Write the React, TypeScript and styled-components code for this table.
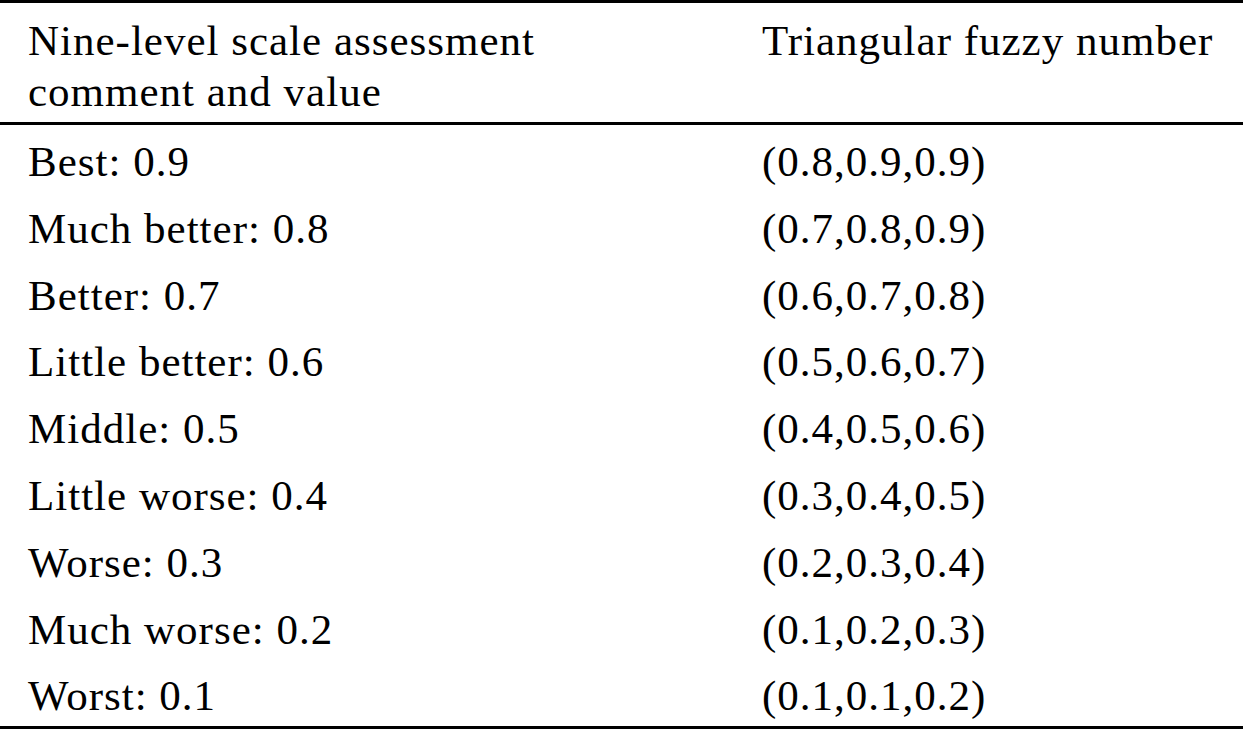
import styled, { createGlobalStyle } from "styled-components";

const GlobalStyle = createGlobalStyle`
  html, body {
    margin: 0;
    padding: 0;
    background: #ffffff;
  }
  body {
    font-family: "Liberation Serif", "Times New Roman", serif;
    color: #000000;
  }
`;

const rows: [string, string][] = [
  ["Best: 0.9", "(0.8,0.9,0.9)"],
  ["Much better: 0.8", "(0.7,0.8,0.9)"],
  ["Better: 0.7", "(0.6,0.7,0.8)"],
  ["Little better: 0.6", "(0.5,0.6,0.7)"],
  ["Middle: 0.5", "(0.4,0.5,0.6)"],
  ["Little worse: 0.4", "(0.3,0.4,0.5)"],
  ["Worse: 0.3", "(0.2,0.3,0.4)"],
  ["Much worse: 0.2", "(0.1,0.2,0.3)"],
  ["Worst: 0.1", "(0.1,0.1,0.2)"],
];

export default function App() {
  return (
    <>
      <GlobalStyle />
      <Table>
        <colgroup>
          <col style={{ width: 762 }} />
          <col />
        </colgroup>
        <thead>
          <HeadRow>
            <HeadCell $first>
              Nine-level scale assessment
              <br />
              comment and value
            </HeadCell>
            <HeadCell>Triangular fuzzy number</HeadCell>
          </HeadRow>
        </thead>
        <tbody>
          {rows.map(([comment, tfn], i) => (
            <BodyRow key={comment} $last={i === rows.length - 1}>
              <Cell $first>{comment}</Cell>
              <Cell>{tfn}</Cell>
            </BodyRow>
          ))}
        </tbody>
      </Table>
    </>
  );
}

const Table = styled.table`
  width: 100%;
  table-layout: fixed;
  border-collapse: collapse;
  font-size: 43px;
  letter-spacing: 1px;
  white-space: nowrap;
`;
const HeadRow = styled.tr`
  border-top: 3px solid #000;
  border-bottom: 3px solid #000;
`;
const HeadCell = styled.th<{ $first?: boolean }>`
  font-weight: normal;
  text-align: left;
  vertical-align: top;
  line-height: 51px;
  padding: 12px 0 5px ${(p) => (p.$first ? "28px" : "0")};
`;
const BodyRow = styled.tr<{ $last?: boolean }>`
  border-bottom: ${(p) => (p.$last ? "3px solid #000" : "none")};
`;
const Cell = styled.td<{ $first?: boolean }>`
  vertical-align: top;
  line-height: 58.8px;
  padding: 8px 0 0 ${(p) => (p.$first ? "28px" : "0")};
`;
